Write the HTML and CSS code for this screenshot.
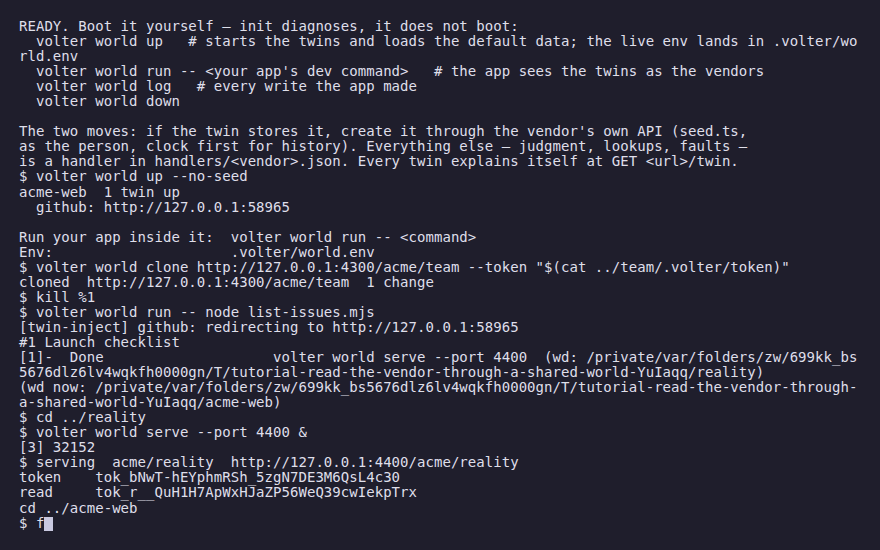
FILE: index.html
```html
<!DOCTYPE html>
<html lang="en">
<head>
<meta charset="utf-8">
<title>Terminal</title>
<link rel="stylesheet" href="styles.css">
</head>
<body>
<main class="terminal">
<pre class="output">READY. Boot it yourself — init diagnoses, it does not boot:
  volter world up   # starts the twins and loads the default data; the live env lands in .volter/wo
rld.env
  volter world run -- &lt;your app's dev command&gt;   # the app sees the twins as the vendors
  volter world log   # every write the app made
  volter world down

The two moves: if the twin stores it, create it through the vendor's own API (seed.ts,
as the person, clock first for history). Everything else — judgment, lookups, faults —
is a handler in handlers/&lt;vendor&gt;.json. Every twin explains itself at GET &lt;url&gt;/twin.
$ volter world up --no-seed
acme-web  1 twin up
  github: http://127.0.0.1:58965

Run your app inside it:  volter world run -- &lt;command&gt;
Env:                     .volter/world.env
$ volter world clone http://127.0.0.1:4300/acme/team --token "$(cat ../team/.volter/token)"
cloned  http://127.0.0.1:4300/acme/team  1 change
$ kill %1
$ volter world run -- node list-issues.mjs
[twin-inject] github: redirecting to http://127.0.0.1:58965
#1 Launch checklist
[1]-  Done                    volter world serve --port 4400  (wd: /private/var/folders/zw/699kk_bs
5676dlz6lv4wqkfh0000gn/T/tutorial-read-the-vendor-through-a-shared-world-YuIaqq/reality)
(wd now: /private/var/folders/zw/699kk_bs5676dlz6lv4wqkfh0000gn/T/tutorial-read-the-vendor-through-
a-shared-world-YuIaqq/acme-web)
$ cd ../reality
$ volter world serve --port 4400 &amp;
[3] 32152
$ serving  acme/reality  http://127.0.0.1:4400/acme/reality
token    tok_bNwT-hEYphmRSh_5zgN7DE3M6QsL4c30
read     tok_r__QuH1H7ApWxHJaZP56WeQ39cwIekpTrx
cd ../acme-web
$ f<span class="cursor"> </span></pre>
</main>
</body>
</html>
```

FILE: styles.css
```css
html, body {
  margin: 0;
  padding: 0;
  background: #1f1e2c;
}
.terminal {
  width: 880px;
  height: 550px;
  box-sizing: border-box;
  padding: 19px 0 0 19px;
  background: #1f1e2c;
  overflow: hidden;
}
.output {
  margin: 0;
  font-family: "DejaVu Sans Mono", "Liberation Mono", monospace;
  font-size: 14px;
  letter-spacing: 0.04px;
  line-height: 15.04px;
  color: #dfdfea;
  white-space: pre;
}
.cursor {
  display: inline-block;
  width: 9px;
  height: 14px;
  margin-top: 1px;
  vertical-align: top;
  background: #c9c9e0;
}
```
